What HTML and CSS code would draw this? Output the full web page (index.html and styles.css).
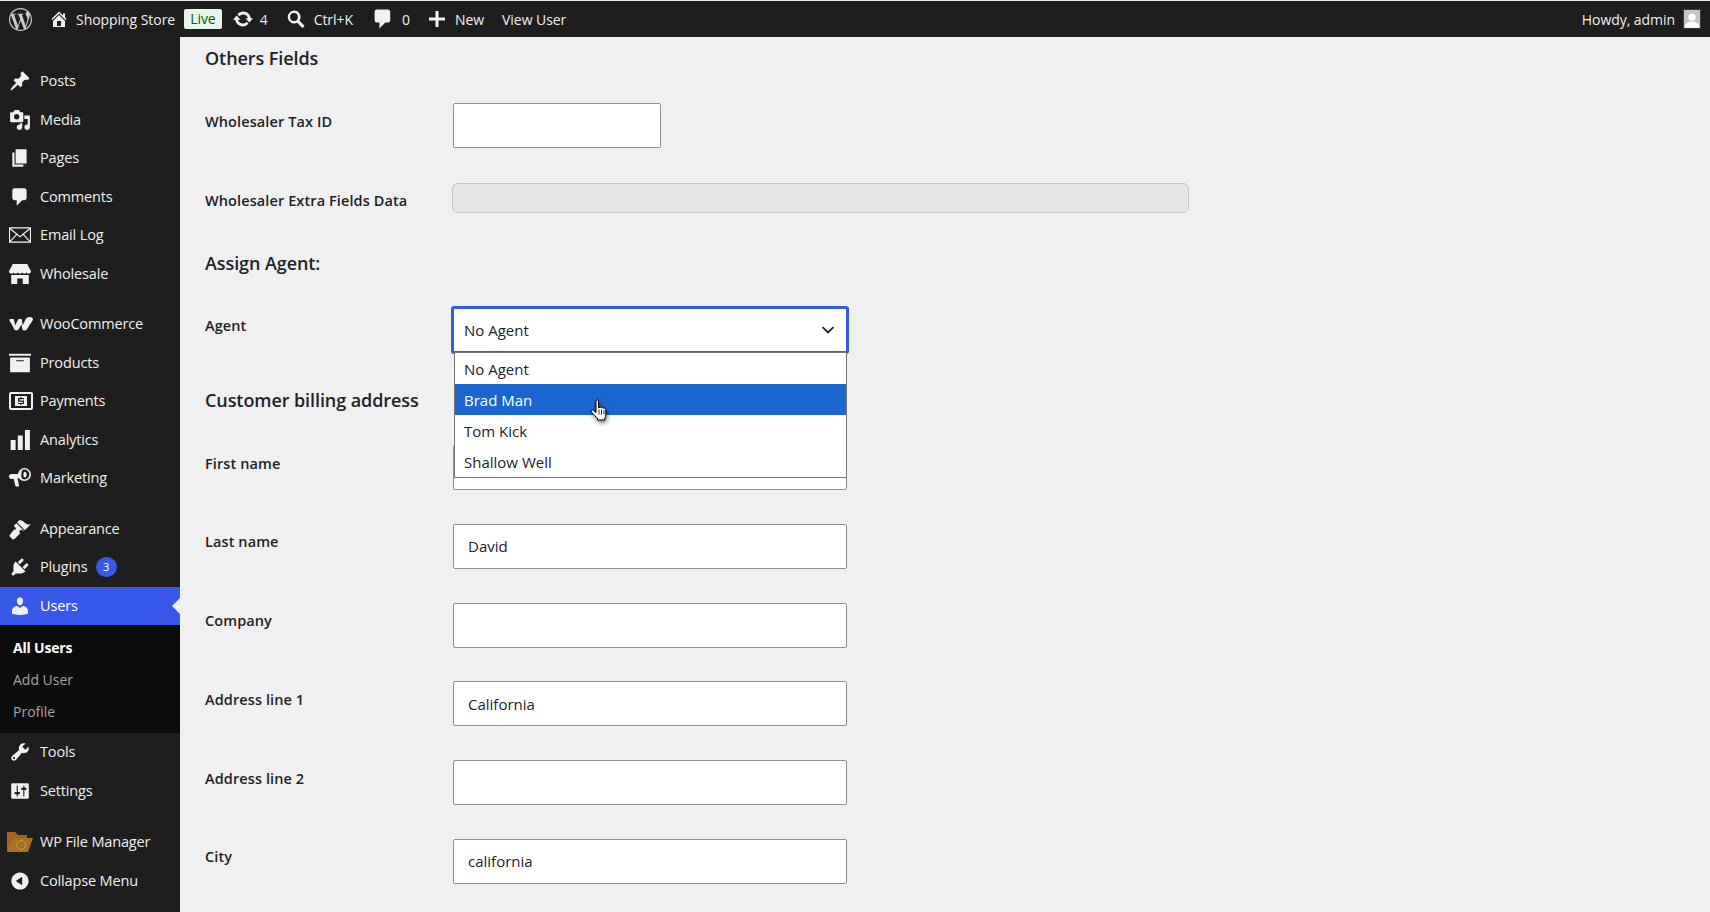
FILE: index.html
```html
<!DOCTYPE html>
<html lang="en">
<head>
    <meta charset="UTF-8">
    <title>Edit User ‹ Shopping Store</title>
    <link rel="stylesheet" href="styles.css">
</head>
<body>
    <!-- Icon sprite -->
    <svg class="sprite" xmlns="http://www.w3.org/2000/svg">
        <symbol id="i-wp" viewBox="0 0 24 24"><path d="M21.469 6.825c.84 1.537 1.318 3.3 1.318 5.175 0 3.979-2.156 7.456-5.363 9.325l3.295-9.527c.615-1.54.82-2.771.82-3.864 0-.405-.026-.78-.07-1.11m-7.981.105c.647-.03 1.232-.105 1.232-.105.582-.075.514-.93-.067-.899 0 0-1.755.135-2.88.135-1.064 0-2.85-.15-2.85-.15-.585-.03-.661.855-.075.885 0 0 .54.061 1.125.09l1.68 4.605-2.37 7.08L5.354 6.9c.649-.03 1.234-.1 1.234-.1.585-.075.516-.93-.065-.896 0 0-1.746.138-2.874.138-.2 0-.438-.008-.69-.015C4.911 3.15 8.235 1.215 12 1.215c2.809 0 5.365 1.072 7.286 2.833-.046-.003-.091-.009-.141-.009-1.06 0-1.812.923-1.812 1.914 0 .89.513 1.643 1.06 2.531.411.72.89 1.643.89 2.977 0 .915-.354 1.994-.821 3.479l-1.075 3.585-3.9-11.61.001.014zM12 22.784c-1.059 0-2.081-.153-3.048-.437l3.237-9.406 3.315 9.087c.024.053.05.101.078.149-1.12.393-2.325.609-3.582.609M1.211 12c0-1.564.336-3.05.935-4.39L7.29 21.709C3.694 19.96 1.212 16.271 1.211 12M12 0C5.385 0 0 5.385 0 12s5.385 12 12 12 12-5.385 12-12S18.615 0 12 0"/></symbol>
        <symbol id="i-home" viewBox="0 0 20 20"><path d="M16 8.5l1.53 1.53-1.06 1.06L10 4.62l-6.47 6.47-1.06-1.06L10 2.5l4 4v-2h2v4zm-6-2.46l6 5.99V18H4v-5.97zM12 17v-5H8v5h4z"/></symbol>
        <symbol id="i-update" viewBox="0 0 20 20"><path d="M10.2 3.28c3.53 0 6.43 2.61 6.92 6h2.08l-3.5 4-3.5-4h2.32c-.45-1.97-2.21-3.45-4.32-3.45-1.45 0-2.73.71-3.54 1.78L4.95 5.66C6.23 4.2 8.11 3.28 10.2 3.28zm-.4 13.44c-3.52 0-6.43-2.61-6.92-6H.8l3.5-4c1.17 1.33 2.33 2.67 3.5 4H5.48c.45 1.97 2.21 3.45 4.32 3.45 1.45 0 2.73-.71 3.54-1.78l1.71 1.95c-1.28 1.46-3.15 2.38-5.25 2.38z"/></symbol>
        <symbol id="i-search" viewBox="0 0 20 20"><path fill-rule="evenodd" d="M8 1.5a6.5 6.5 0 0 1 5.4 10.1l4.6 4.6c.4.4.4 1 0 1.4l-.8.8c-.4.4-1 .4-1.4 0l-4.6-4.6A6.5 6.5 0 1 1 8 1.5zm0 2.6a3.9 3.9 0 1 0 0 7.8 3.9 3.9 0 0 0 0-7.8z"/></symbol>
        <symbol id="i-comment" viewBox="0 0 20 20"><path d="M5 2h9c1.1 0 2 .9 2 2v7c0 1.1-.9 2-2 2h-2l-5 5v-5H5c-1.1 0-2-.9-2-2V4c0-1.1.9-2 2-2z"/></symbol>
        <symbol id="i-plus" viewBox="0 0 20 20"><path d="M18 8.5v3h-6.5V18h-3v-6.5H2v-3h6.5V2h3v6.5z"/></symbol>
        <symbol id="i-post" viewBox="0 0 20 20"><path d="M10.44 3.02l1.82-1.82 6.36 6.35-1.83 1.82c-1.05-.68-2.48-.57-3.41.36l-.75.75c-.92.93-1.04 2.35-.35 3.41l-1.83 1.82-2.41-2.41-2.8 2.79c-.42.42-3.38 2.71-3.8 2.29s1.86-3.39 2.28-3.81l2.79-2.79L4.1 9.36l1.83-1.82c1.05.69 2.48.57 3.4-.36l.75-.75c.93-.92 1.05-2.35.36-3.41z"/></symbol>
        <symbol id="i-media" viewBox="0 0 20 20"><path d="M13 11V4c0-.55-.45-1-1-1h-1.67L9 1H5L3.67 3H2c-.55 0-1 .45-1 1v7c0 .55.45 1 1 1h10c.55 0 1-.45 1-1zM7 4.5c1.38 0 2.5 1.12 2.5 2.5S8.38 9.5 7 9.5 4.5 8.38 4.5 7 5.62 4.5 7 4.5zM14 6h5v10.5c0 1.38-1.12 2.5-2.5 2.5S14 17.88 14 16.5s1.12-2.5 2.5-2.5c.17 0 .34.02.5.05V9h-3V6zm-4 8.05V13h2v3.5c0 1.38-1.12 2.5-2.5 2.5S7 17.88 7 16.5 8.12 14 9.5 14c.17 0 .34.02.5.05z"/></symbol>
        <symbol id="i-page" viewBox="0 0 20 20"><path d="M6 15V2h10v13H6zm-1 1h8v2H3V5h2v11z"/></symbol>
        <symbol id="i-mail" viewBox="0 0 20 20"><path fill-rule="evenodd" d="M0 3h20v14H0zM1.8 4.2L10 11l8.2-6.8zM1 5v10.2L6.4 9.4zm18 0l-5.400 4.400L19 15.200zM7.200 10l-5.400 5.800h16.400L12.800 10 10 12.300z"/></symbol>
        <symbol id="i-store" viewBox="0 0 20 20"><path d="M3.500 1h13L20 7.500c0 1.300-1 2.200-2.200 2.200-.9 0-1.500-.4-1.800-1-.4.600-1.100 1-2 1s-1.600-.4-2-1c-.4.600-1.100 1-2 1s-1.600-.4-2-1c-.4.600-1.100 1-2 1s-1.500-.4-1.800-1c-.3.600-1 1-1.900 1C1 9.700 0 8.800 0 7.500zM2 11h16v8h-5.500v-5h-5v5H2z"/></symbol>
        <symbol id="i-woo" viewBox="0 0 24 14"><path d="M.5 2h4.300l1.400 6.200L9.500 2h3.200l1 6.200L16.800 2c1-1.400 2.500-2 4-2C22.900 0 24 1 24 2.300c0 1.200-2.500 4.300-4.400 7.400-1 1.700-2.100 3.800-4 3.800-1.600 0-2.200-1.200-2.500-2.600l-.7-3.400-2.500 4.300c-.7 1.100-1.500 1.700-2.700 1.700-1.700 0-2.400-1.300-2.800-2.900L2.300 6.500C2 5.500 0 4.500.5 2z"/></symbol>
        <symbol id="i-box" viewBox="0 0 20 20"><path fill-rule="evenodd" d="M0 1.500h20v2H0zM1 5h18v13.500H1zM6.500 7.500v1h7v-1z"/></symbol>
        <symbol id="i-pay" viewBox="0 0 24 18"><path fill-rule="evenodd" d="M2 0h20a2 2 0 0 1 2 2v14a2 2 0 0 1-2 2H2a2 2 0 0 1-2-2V2a2 2 0 0 1 2-2zm0 2v14h20V2zm4 2h12v10H6zm6.500 1h-1.200v1.100H9v3.600h4.800v1.300H9v1.100h2.300V13h1.200v-.9H15V8.500h-4.700V7.200H15V6.100h-2.500z"/></symbol>
        <symbol id="i-chart" viewBox="0 0 20 20"><path d="M19 19V1h-4.500v18zm-6.500 0V6H8v13zM6 19v-9H1.500v9z"/></symbol>
        <symbol id="i-mega" viewBox="0 0 22 22"><path d="M2.500 7h6.500l5-5c-2.200 2.800-2.200 9.500 0 12l-5-3H8.500l1.500 7.500c.1.500-.2 1-.7 1H7.200c-.4 0-.8-.3-.9-.7L4.800 12H2.500a2.500 2.500 0 0 1 0-5z"/><circle cx="15.500" cy="7.500" r="5.700" fill="none" stroke="#f0f0f0" stroke-width="1.600"/><ellipse cx="16" cy="7.500" rx="1.700" ry="2.800"/></symbol>
        <symbol id="i-brush" viewBox="0 0 20 20"><path d="M14.480 11.060L7.410 3.990l1.500-1.500c.5-.56 2.300-.47 3.510.32 1.210.8 1.430 1.280 2.910 2.100 1.180.64 2.450 1.260 4.450.85zm-.71.71L6.700 4.700 4.930 6.470c-.39.39-.39 1.020 0 1.410l1.060 1.060c.39.39.39 1.020 0 1.410-.39.39-1.020.39-1.410 0L.96 14.980c-.59.59-.59 1.540 0 2.120l1.940 1.940c.58.590 1.530.590 2.120 0l4.600-4.600c.39-.39.39-1.020 0-1.410-.39-.39-.39-1.020 0-1.410l.7-.71c.39-.39 1.020-.39 1.410 0l.5.500z"/></symbol>
        <symbol id="i-plug" viewBox="0 0 20 20"><path d="M13.110 4.360L9.870 7.600 8 5.730l3.240-3.240c.35-.34 1.050-.2 1.560.32.52.51.66 1.210.31 1.550zm-8 1.770l.91-1.120 9.010 9.010-1.190.84c-.71.71-2.630 1.160-3.820 1.160H6.140L4.900 17.260c-.59.59-1.540.59-2.120 0-.59-.58-.59-1.530 0-2.120l1.240-1.240v-3.880c0-1.130.4-3.190 1.090-3.890zm7.260 3.970l3.240-3.240c.34-.35 1.040-.21 1.550.31.52.51.66 1.210.31 1.550l-3.240 3.250z"/></symbol>
        <symbol id="i-user" viewBox="0 0 20 20"><path d="M10 9.250c-2.270 0-2.730-3.440-2.730-3.440C7 4.020 7.820 2 9.970 2c2.160 0 2.980 2.020 2.710 3.810 0 0-.41 3.440-2.68 3.440zm0 2.570L12.720 10c2.390 0 4.520 2.330 4.520 4.530v2.490s-3.650 1.130-7.240 1.130c-3.650 0-7.240-1.130-7.240-1.130v-2.490c0-2.250 1.940-4.480 4.470-4.480z"/></symbol>
        <symbol id="i-tools" viewBox="0 0 20 20"><path d="M16.680 9.770c-1.340 1.340-3.300 1.670-4.950.99l-5.410 6.520c-.99.99-2.590.99-3.580 0s-.99-2.59 0-3.570l6.520-5.420c-.68-1.650-.35-3.610.99-4.950 1.280-1.280 3.120-1.620 4.720-1.060l-2.890 2.890 2.820 2.820 2.860-2.870c.53 1.580.18 3.390-1.080 4.670zM3.810 16.210c.4.39 1.040.39 1.430 0 .4-.4.4-1.040 0-1.430-.39-.4-1.030-.4-1.430 0-.39.39-.39 1.030 0 1.430z"/></symbol>
        <symbol id="i-settings" viewBox="0 0 20 20"><path d="M18 16V4c0-.55-.45-1-1-1H3c-.55 0-1 .45-1 1v12c0 .55.45 1 1 1h14c.55 0 1-.45 1-1zM8 11h1c.55 0 1 .45 1 1s-.45 1-1 1H8v1.500c0 .28-.22.5-.5.5s-.5-.22-.5-.5V13H6c-.55 0-1-.45-1-1s.45-1 1-1h1V5.500c0-.28.22-.5.5-.5s.5.22.5.5V11zm5-2h-1c-.55 0-1-.45-1-1s.45-1 1-1h1V5.500c0-.28.22-.5.5-.5s.5.22.5.5V7h1c.55 0 1 .45 1 1s-.45 1-1 1h-1v5.500c0 .28-.22.5-.5.5s-.5-.22-.5-.5V9z"/></symbol>
        <symbol id="i-collapse" viewBox="0 0 20 20"><path d="M10 2.160c4.330 0 7.840 3.510 7.840 7.840s-3.510 7.840-7.840 7.840S2.160 14.330 2.160 10 5.710 2.160 10 2.160zm2 11.720V6.120L6.180 9.970z"/></symbol>
    </svg>

    <!-- Admin bar -->
    <header class="adminbar">
        <svg class="bar-logo"><use href="#i-wp"/></svg>
        <a class="bar-item site"><svg class="bar-icon"><use href="#i-home"/></svg>Shopping Store</a>
        <span class="live">Live</span>
        <a class="bar-item updates"><svg class="bar-icon"><use href="#i-update"/></svg>4</a>
        <a class="bar-item find"><svg class="bar-icon"><use href="#i-search"/></svg>Ctrl+K</a>
        <a class="bar-item talk"><svg class="bar-icon"><use href="#i-comment"/></svg>0</a>
        <a class="bar-item new"><svg class="bar-icon"><use href="#i-plus"/></svg>New</a>
        <a class="bar-item view">View User</a>
        <a class="bar-item howdy">Howdy, admin
            <span class="avatar"><svg viewBox="0 0 18 20"><circle cx="9" cy="8" r="4.200"/><path d="M1 20c0-5 4-7 8-7s8 2 8 7z"/></svg></span>
        </a>
    </header>

    <div class="layout">
        <!-- Sidebar -->
        <nav class="sidebar">
            <ul class="menu">
                <li class="item"><svg class="icon"><use href="#i-post"/></svg>Posts</li>
                <li class="item"><svg class="icon"><use href="#i-media"/></svg>Media</li>
                <li class="item"><svg class="icon"><use href="#i-page"/></svg>Pages</li>
                <li class="item"><svg class="icon"><use href="#i-comment"/></svg>Comments</li>
                <li class="item"><svg class="icon"><use href="#i-mail"/></svg>Email Log</li>
                <li class="item"><svg class="icon"><use href="#i-store"/></svg>Wholesale</li>
                <li class="item spaced"><svg class="icon wide"><use href="#i-woo"/></svg>WooCommerce</li>
                <li class="item"><svg class="icon"><use href="#i-box"/></svg>Products</li>
                <li class="item"><svg class="icon wide"><use href="#i-pay"/></svg>Payments</li>
                <li class="item"><svg class="icon"><use href="#i-chart"/></svg>Analytics</li>
                <li class="item"><svg class="icon"><use href="#i-mega"/></svg>Marketing</li>
                <li class="item spaced"><svg class="icon"><use href="#i-brush"/></svg>Appearance</li>
                <li class="item"><svg class="icon"><use href="#i-plug"/></svg>Plugins <span class="count">3</span></li>
                <li class="item current"><svg class="icon"><use href="#i-user"/></svg>Users</li>
                <li class="submenu">
                    <a class="sub-link active">All Users</a>
                    <a class="sub-link">Add User</a>
                    <a class="sub-link">Profile</a>
                </li>
                <li class="item"><svg class="icon"><use href="#i-tools"/></svg>Tools</li>
                <li class="item"><svg class="icon"><use href="#i-settings"/></svg>Settings</li>
                <li class="item spaced last-group">
                    <svg class="icon folder" viewBox="0 0 26 22">
                        <path fill="#a8621f" d="M0 1h8l3 3h9v4H6L2 20H0z"/>
                        <path fill="#a9701f" d="M6 7h20l-5 14H0z"/>
                        <circle cx="14" cy="14" r="4.500" fill="none" stroke="#c99a4a"/>
                    </svg>WP File Manager
                </li>
                <li class="item"><svg class="icon"><use href="#i-collapse"/></svg>Collapse Menu</li>
            </ul>
        </nav>

        <!-- Form -->
        <main class="content">
            <h2 class="heading first">Others Fields</h2>
            <div class="row tax">
                <label class="label">Wholesaler Tax ID</label>
                <input type="text" class="input short">
            </div>
            <div class="row extra">
                <label class="label">Wholesaler Extra Fields Data</label>
                <div class="readonly"></div>
            </div>

            <h2 class="heading agent-heading">Assign Agent:</h2>
            <div class="row agent">
                <label class="label">Agent</label>
                <div class="select-wrap">
                    <div class="select">No Agent
                        <svg class="chevron" viewBox="0 0 14 8"><path d="M1.500 1.200L7 6.500l5.500-5.300" fill="none" stroke="#1d2327" stroke-width="1.800"/></svg>
                    </div>
                    <ul class="dropdown">
                        <li class="option">No Agent</li>
                        <li class="option hover">Brad Man
                            <svg class="cursor" viewBox="0 0 18 24">
                                <path fill="#fff" stroke="#000" stroke-width="1" d="M6 2.200c0-1.600 2.500-1.600 2.500 0V9l.6-.1c.2-1.200 2.200-1.200 2.400.2.300-1 2.100-.9 2.300.4.500-.7 2-.4 2 .9v5.100c0 1.500-.4 2.500-1 3.500v2H7.500v-1.800C6 17.800 3.500 15.600 1.500 13c-1-1.400.8-2.800 2.200-1.500L6 13.500z"/>
                                <path stroke="#000" stroke-width=".8" d="M9 10.500v5M11.500 10.500v5M14 11v4.500"/>
                            </svg>
                        </li>
                        <li class="option">Tom Kick</li>
                        <li class="option">Shallow Well</li>
                    </ul>
                </div>
            </div>

            <h2 class="heading billing">Customer billing address</h2>
            <div class="fields">
                <div class="row"><label class="label">First name</label><input type="text" class="input"></div>
                <div class="row"><label class="label">Last name</label><input type="text" class="input" value="David"></div>
                <div class="row"><label class="label">Company</label><input type="text" class="input"></div>
                <div class="row"><label class="label">Address line 1</label><input type="text" class="input" value="California"></div>
                <div class="row"><label class="label">Address line 2</label><input type="text" class="input"></div>
                <div class="row"><label class="label">City</label><input type="text" class="input" value="california"></div>
            </div>
        </main>
    </div>
</body>
</html>
```

FILE: styles.css
```css
* {
    box-sizing: border-box;
}
html, body {
    height: 912px;
    overflow: hidden;
}
body {
    margin: 0;
    background-color: #f0f0f0;
    color: #1d2327;
    font-family: "Open Sans", "Noto Sans", sans-serif;
    font-size: 15px;
}
.sprite {
    display: none;
}

/* Admin bar */
.adminbar {
    display: flex;
    align-items: center;
    height: 37px;
    padding-left: 9px;
    border-top: 1px solid #e8e8e8;
    background-color: #1e1e1e;
    color: #f0f0f0;
    font-size: 14px;
    letter-spacing: -0.05px;
}
.bar-logo {
    width: 23px;
    height: 23px;
    fill: #c8cbce;
}
.bar-item {
    display: flex;
    align-items: center;
    white-space: nowrap;
}
.bar-icon {
    width: 20px;
    height: 20px;
    fill: #f0f0f0;
    margin-right: 8px;
}
.site {
    margin-left: 17px;
}
.site .bar-icon {
    margin-right: 7px;
}
.live {
    margin-left: 9px;
    padding: 0 6px;
    height: 20px;
    line-height: 20px;
    border-radius: 2px;
    background-color: #e8f5e9;
    color: #0b5a20;
}
.updates {
    margin-left: 10px;
}
.updates .bar-icon {
    width: 22px;
    height: 22px;
    margin-right: 6px;
}
.find {
    margin-left: 18px;
}
.talk {
    margin-left: 18px;
}
.talk .bar-icon {
    width: 24px;
    height: 24px;
    margin-right: 7px;
}
.new {
    margin-left: 17px;
}
.view {
    margin-left: 18px;
}
.howdy {
    margin-left: auto;
    margin-right: 9px;
}
.avatar {
    width: 18px;
    height: 20px;
    margin-left: 8px;
    background-color: #c4c4c4;
    border: 1px solid #3c3c3c;
    overflow: hidden;
}
.avatar svg {
    display: block;
    fill: #fff;
}

/* Sidebar */
.layout {
    display: flex;
    height: 875px;
}
.sidebar {
    width: 180px;
    flex-shrink: 0;
    background-color: #1e1e1e;
    color: #f0f0f0;
    font-size: 14.500px;
    letter-spacing: -0.15px;
}
.menu {
    list-style: none;
    margin: 0;
    padding: 25px 0 0;
}
.item {
    display: flex;
    align-items: center;
    height: 38.500px;
    padding: 0 0 1px 40px;
    position: relative;
}
.item.spaced {
    margin-top: 12px;
}
.item.last-group {
    margin-top: 13px;
}
.icon {
    position: absolute;
    left: 9px;
    top: 8px;
    width: 22px;
    height: 22px;
    fill: #f0f0f0;
}
.icon.wide {
    width: 24px;
}
.icon.folder {
    left: 7px;
    width: 26px;
    height: 22px;
}
.count {
    display: inline-block;
    width: 21px;
    height: 20px;
    line-height: 20px;
    margin-left: 8px;
    border-radius: 10px;
    background-color: #3858e9;
    color: #fff;
    font-size: 11px;
    text-align: center;
}
.item.current {
    background-color: #3858e9;
    color: #fff;
}
.item.current::after {
    content: "";
    position: absolute;
    right: 0;
    top: 11px;
    border: 8px solid transparent;
    border-right-color: #f0f0f0;
    border-left-width: 0;
}
.submenu {
    display: flex;
    flex-direction: column;
    height: 108px;
    padding: 7px 0 6px 13px;
    background-color: #0c0c0c;
    font-size: 14px;
    letter-spacing: 0;
}
.sub-link {
    height: 32px;
    line-height: 32px;
    color: #a4a4a4;
}
.sub-link.active {
    color: #fff;
    font-weight: 700;
    letter-spacing: -0.2px;
}

/* Form */
.content {
    flex: 1;
    padding: 9px 0 0 25px;
}
.heading {
    margin: 0;
    font-size: 18px;
    line-height: 24px;
    font-weight: 600;
    letter-spacing: -0.08px;
}
.agent-heading {
    margin-top: 38px;
}
.billing {
    margin-top: 34px;
}
.row {
    display: flex;
    align-items: flex-start;
}
.label {
    width: 248px;
    flex-shrink: 0;
    font-size: 14.500px;
    line-height: 20px;
    padding-top: 8.500px;
    font-weight: 600;
    letter-spacing: 0.1px;
}
.tax {
    margin-top: 33px;
}
.extra {
    margin-top: 35px;
}
.extra .label {
    padding-top: 7.500px;
}
.input {
    width: 394px;
    height: 45px;
    padding: 0 14px;
    border: 1px solid #8c8f94;
    border-radius: 2px;
    background-color: #fff;
    color: #1d2327;
    font: inherit;
    outline: none;
}
.input.short {
    width: 208px;
}
.readonly {
    width: 737px;
    height: 30px;
    margin-left: -1px;
    border: 1px solid #c3c4c7;
    border-radius: 6px;
    background-color: #e6e6e6;
}
.agent {
    margin-top: 31px;
}
.agent .label {
    padding-top: 9.500px;
}
.select-wrap {
    position: relative;
    margin-left: -2px;
}
.select {
    display: flex;
    align-items: center;
    justify-content: space-between;
    width: 398px;
    height: 48px;
    padding: 0 11px 1px 10px;
    border: 3px solid #3858e9;
    border-radius: 3px;
    background-color: #fff;
}
.chevron {
    width: 14px;
    height: 8px;
}
.dropdown {
    list-style: none;
    position: absolute;
    z-index: 2;
    left: 3px;
    top: 46px;
    width: 393px;
    margin: 0;
    padding: 0;
    border: 1px solid #767676;
    background-color: #fff;
}
.option {
    position: relative;
    height: 31px;
    line-height: 32px;
    padding-left: 9px;
}
.option.hover {
    background-color: #1a67d2;
    color: #fff;
}
.cursor {
    position: absolute;
    left: 135px;
    top: 15px;
    width: 18px;
    height: 24px;
    filter: drop-shadow(1px 2px 2px rgba(0, 0, 0, 0.6));
}
.fields {
    display: flex;
    flex-direction: column;
    gap: 33.800px;
    margin-top: 33px;
}
```
